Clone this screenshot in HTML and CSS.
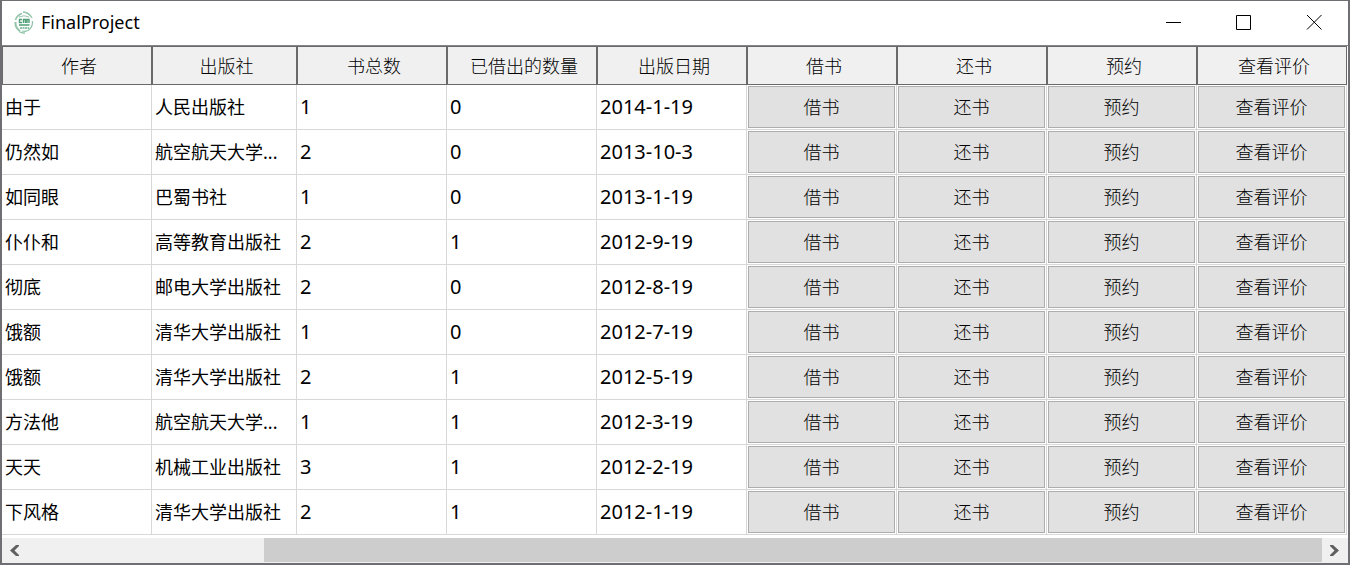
FILE: index.html
```html
<!DOCTYPE html>
<html lang="zh-CN">
<head>
    <meta charset="UTF-8">
    <meta name="viewport" content="width=device-width, initial-scale=1.0">
    <title>FinalProject</title>
    <link rel="stylesheet" href="styles.css">
</head>
<body>

    <div class="window">
        <header class="titlebar">
            <svg class="logo" viewBox="0 0 20 24" fill="none" stroke="#93c5aa">
                <path d="M8 2.5 Q3 4 1.5 9" stroke-width="1.6"/>
                <path d="M9 1 Q15 1.5 18 7" stroke-width="1.4"/>
                <path d="M1.5 11 Q1 17 6 20" stroke-width="2"/>
                <path d="M5 20.5 Q8 22.5 11 22" stroke-width="1.5"/>
                <path d="M18.5 10 Q19 16 14 19.5 Q11 21 8 20" stroke-width="1.3"/>
                <path d="M5 6 Q10 3.5 15 6" stroke-width="1"/>
                <path d="M8 8.5 H5.5 V11.5 H8 M9.5 12 V8.5 H11.5 V12 M13 12 V8.5 H15 V12" stroke="#4f9f77" stroke-width="1.4"/>
                <path d="M5 14 H15.5" stroke="#3f9468" stroke-width="1.4"/>
                <path d="M6 17 H15" stroke="#6fae8d" stroke-width="1.6" stroke-dasharray="2 .5"/>
            </svg>
            <h1>FinalProject</h1>
            <div class="controls">
                <button type="button" aria-label="最小化">
                    <svg viewBox="0 0 16 16"><path d="M0 8.5 H15"/></svg>
                </button>
                <button type="button" aria-label="最大化">
                    <svg viewBox="0 0 16 16"><path d="M.5 1.5 H14.5 V15.5 H.5 Z"/></svg>
                </button>
                <button type="button" aria-label="关闭">
                    <svg viewBox="0 0 16 16"><path d="M1 1 L15.5 15.5 M15.5 1 L1 15.5"/></svg>
                </button>
            </div>
        </header>

        <main class="content">
            <table class="books">
                <colgroup>
                    <col>
                    <col class="col-press">
                    <col span="7">
                </colgroup>
                <thead>
                    <tr>
                        <th>作者</th><th>出版社</th><th>书总数</th><th>已借出的数量</th><th>出版日期</th>
                        <th>借书</th><th>还书</th><th>预约</th><th>查看评价</th>
                    </tr>
                </thead>
                <tbody>
                    <tr>
                        <td>由于</td><td>人民出版社</td><td class="num">1</td><td class="num">0</td><td class="num">2014-1-19</td>
                        <td class="action"><button type="button">借书</button></td>
                        <td class="action"><button type="button">还书</button></td>
                        <td class="action"><button type="button">预约</button></td>
                        <td class="action"><button type="button">查看评价</button></td>
                    </tr>
                    <tr>
                        <td>仍然如</td><td>航空航天大学...</td><td class="num">2</td><td class="num">0</td><td class="num">2013-10-3</td>
                        <td class="action"><button type="button">借书</button></td>
                        <td class="action"><button type="button">还书</button></td>
                        <td class="action"><button type="button">预约</button></td>
                        <td class="action"><button type="button">查看评价</button></td>
                    </tr>
                    <tr>
                        <td>如同眼</td><td>巴蜀书社</td><td class="num">1</td><td class="num">0</td><td class="num">2013-1-19</td>
                        <td class="action"><button type="button">借书</button></td>
                        <td class="action"><button type="button">还书</button></td>
                        <td class="action"><button type="button">预约</button></td>
                        <td class="action"><button type="button">查看评价</button></td>
                    </tr>
                    <tr>
                        <td>仆仆和</td><td>高等教育出版社</td><td class="num">2</td><td class="num">1</td><td class="num">2012-9-19</td>
                        <td class="action"><button type="button">借书</button></td>
                        <td class="action"><button type="button">还书</button></td>
                        <td class="action"><button type="button">预约</button></td>
                        <td class="action"><button type="button">查看评价</button></td>
                    </tr>
                    <tr>
                        <td>彻底</td><td>邮电大学出版社</td><td class="num">2</td><td class="num">0</td><td class="num">2012-8-19</td>
                        <td class="action"><button type="button">借书</button></td>
                        <td class="action"><button type="button">还书</button></td>
                        <td class="action"><button type="button">预约</button></td>
                        <td class="action"><button type="button">查看评价</button></td>
                    </tr>
                    <tr>
                        <td>饿额</td><td>清华大学出版社</td><td class="num">1</td><td class="num">0</td><td class="num">2012-7-19</td>
                        <td class="action"><button type="button">借书</button></td>
                        <td class="action"><button type="button">还书</button></td>
                        <td class="action"><button type="button">预约</button></td>
                        <td class="action"><button type="button">查看评价</button></td>
                    </tr>
                    <tr>
                        <td>饿额</td><td>清华大学出版社</td><td class="num">2</td><td class="num">1</td><td class="num">2012-5-19</td>
                        <td class="action"><button type="button">借书</button></td>
                        <td class="action"><button type="button">还书</button></td>
                        <td class="action"><button type="button">预约</button></td>
                        <td class="action"><button type="button">查看评价</button></td>
                    </tr>
                    <tr>
                        <td>方法他</td><td>航空航天大学...</td><td class="num">1</td><td class="num">1</td><td class="num">2012-3-19</td>
                        <td class="action"><button type="button">借书</button></td>
                        <td class="action"><button type="button">还书</button></td>
                        <td class="action"><button type="button">预约</button></td>
                        <td class="action"><button type="button">查看评价</button></td>
                    </tr>
                    <tr>
                        <td>天天</td><td>机械工业出版社</td><td class="num">3</td><td class="num">1</td><td class="num">2012-2-19</td>
                        <td class="action"><button type="button">借书</button></td>
                        <td class="action"><button type="button">还书</button></td>
                        <td class="action"><button type="button">预约</button></td>
                        <td class="action"><button type="button">查看评价</button></td>
                    </tr>
                    <tr>
                        <td>下风格</td><td>清华大学出版社</td><td class="num">2</td><td class="num">1</td><td class="num">2012-1-19</td>
                        <td class="action"><button type="button">借书</button></td>
                        <td class="action"><button type="button">还书</button></td>
                        <td class="action"><button type="button">预约</button></td>
                        <td class="action"><button type="button">查看评价</button></td>
                    </tr>
                </tbody>
            </table>
        </main>

        <div class="scrollbar">
            <button type="button" aria-label="向左滚动">
                <svg viewBox="0 0 10 12"><path d="M9 0 H6 L0 5.5 L6 11 H9 V10 L4.5 5.5 L9 1 Z"/></svg>
            </button>
            <div class="track"><div class="thumb"></div></div>
            <button type="button" aria-label="向右滚动">
                <svg viewBox="0 0 10 12"><path d="M0 0 H3 L9 5.5 L3 11 H0 V10 L4.5 5.5 L0 1 Z"/></svg>
            </button>
        </div>
    </div>

</body>
</html>
```
FILE: styles.css
```css
* {
    box-sizing: border-box;
    margin: 0;
    padding: 0;
}
body {
    font-family: "Noto Sans", "Noto Sans CJK SC", sans-serif;
    font-size: 18px;
    color: #000;
    background: #fff;
}
button {
    font: inherit;
    color: inherit;
    border: none;
    background: none;
}
.window {
    display: flex;
    flex-direction: column;
    min-height: 100vh;
    border: 2px solid #6f6e72;
    border-top-width: 1px;
}

/* title bar */
.titlebar {
    display: flex;
    align-items: center;
    height: 45px;
    padding-left: 12px;
    border-bottom: 1px solid #85848a;
}
.logo {
    width: 20px;
    height: 24px;
}
h1 {
    flex: 1;
    margin-left: 7px;
    padding-bottom: 2px;
    font-size: 18px;
    font-weight: normal;
    line-height: 24px;
}
.controls {
    display: flex;
    gap: 2px;
    height: 100%;
}
.controls button {
    display: flex;
    align-items: center;
    justify-content: center;
    width: 68px;
    padding-bottom: 2px;
}
.controls svg {
    width: 16px;
    height: 16px;
    fill: none;
    stroke: #000;
}

/* table */
.content {
    flex: 1;
    padding-right: 1px;
}
.books {
    width: 100%;
    table-layout: fixed;
    border-collapse: separate;
    border-spacing: 0;
}
.col-press {
    width: 145px;
}
th {
    height: 39px;
    padding: 0 0 2px 4px;
    font-family: "Noto Sans CJK SC", sans-serif;
    font-weight: 300;
    line-height: 24px;
    background: #f0f0f0;
    border: 1px solid #696969;
}
td {
    height: 45px;
    padding-left: 3px;
    line-height: 24px;
    white-space: nowrap;
    overflow: hidden;
    border-right: 1px solid #d8d8d8;
    border-bottom: 1px solid #d8d8d8;
}
.num {
    font-size: 20px;
}
.action {
    padding: 1px;
}
.action button {
    display: block;
    width: 100%;
    height: 42px;
    padding-bottom: 2px;
    font-family: "Noto Sans CJK SC", sans-serif;
    font-weight: 300;
    line-height: 24px;
    background: #e1e1e1;
    border: 1px solid #adadad;
}

/* scroll bar */
.scrollbar {
    display: flex;
    height: 25px;
    background: #f0f0f0;
}
.scrollbar button {
    display: flex;
    align-items: center;
    justify-content: center;
    width: 26px;
}
.scrollbar svg {
    width: 10px;
    height: 12px;
    fill: #606060;
}
.track {
    flex: 1;
}
.thumb {
    width: calc(82% - 3px);
    height: 24px;
    margin-left: auto;
    background: #cdcdcd;
}
```
